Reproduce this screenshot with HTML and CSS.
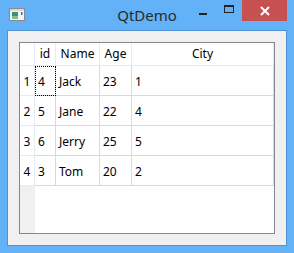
FILE: index.html
```html
<!DOCTYPE html>
<html lang="en">
<head>
  <meta charset="UTF-8" />
  <title>QtDemo</title>
  <link rel="stylesheet" href="styles.css">
</head>
<body>
  <div class="window">
    <div class="titlebar">
      <svg class="app-icon" width="16" height="13" viewBox="0 0 16 13">
        <rect x="0.5" y="0.5" width="15" height="12" fill="#f4f4f4" stroke="#8a8a8a"/>
        <rect x="1" y="1" width="14" height="2" fill="#d8d8d8"/>
        <rect x="3" y="4" width="6" height="7" fill="#3f8f80"/>
        <rect x="3" y="8" width="6" height="3" fill="#7cbf9e"/>
        <rect x="12" y="4" width="1.5" height="3" fill="#2e6fd0"/>
      </svg>
      <div class="title">QtDemo</div>
      <div class="controls">
        <div class="btn btn-min"><span class="min-bar"></span></div>
        <div class="btn btn-max"><span class="max-box"></span></div>
        <div class="btn btn-close">
          <svg width="10" height="10" viewBox="0 0 10 10">
            <path d="M1 1 L9 9 M9 1 L1 9" stroke="#fff" stroke-width="2"/>
          </svg>
        </div>
      </div>
    </div>
    <div class="client">
      <div class="grid">
        <div class="hcell corner"></div>
        <div class="hcell">id</div>
        <div class="hcell">Name</div>
        <div class="hcell">Age</div>
        <div class="hcell">City</div>

        <div class="vcell">1</div>
        <div class="cell focus">4</div>
        <div class="cell">Jack</div>
        <div class="cell">23</div>
        <div class="cell">1</div>

        <div class="vcell">2</div>
        <div class="cell">5</div>
        <div class="cell">Jane</div>
        <div class="cell">22</div>
        <div class="cell">4</div>

        <div class="vcell">3</div>
        <div class="cell">6</div>
        <div class="cell">Jerry</div>
        <div class="cell">25</div>
        <div class="cell">5</div>

        <div class="vcell">4</div>
        <div class="cell">3</div>
        <div class="cell">Tom</div>
        <div class="cell">20</div>
        <div class="cell">2</div>

        <div class="vfill"></div>
        <div class="empty"></div>
      </div>
    </div>
  </div>
</body>
</html>
```

FILE: styles.css
```css
body { margin: 0; font-family: "Noto Sans", "Open Sans", sans-serif; }
.window {
  width: 294px;
  height: 253px;
  background: #63b1f7;
  display: flex;
  flex-direction: column;
  box-sizing: border-box;
}
.titlebar {
  height: 30px;
  position: relative;
  display: flex;
  align-items: flex-start;
}
.app-icon { margin: 8px 0 0 9px; }
.title {
  position: absolute;
  left: 0;
  right: 0;
  top: 5px;
  text-align: center;
  font-size: 15px;
  color: #2a2a2a;
}
.controls {
  margin-left: auto;
  margin-right: 7px;
  display: flex;
  position: relative;
}
.btn {
  height: 21px;
  display: flex;
  align-items: center;
  justify-content: center;
}
.btn-min { width: 26px; }
.btn-max { width: 26px; }
.btn-close { width: 45px; background: #c75050; }
.min-bar { width: 8px; height: 2px; background: #222; margin-top: 6px; }
.max-box {
  width: 8px;
  height: 5px;
  border: 1px solid #222;
  border-top-width: 2px;
  margin-top: -3px;
}
.client {
  margin: 0 7px 7px 7px;
  flex: 1;
  background: #f0f0f0;
  border: 1px solid #4f93d4;
  padding: 11px;
  display: flex;
}
.grid {
  flex: 1;
  border: 1px solid #828790;
  background: #fff;
  display: grid;
  grid-template-columns: 15px 21px 44px 32px 1fr;
  grid-template-rows: 23px 30px 30px 30px 30px 1fr;
  font-size: 12px;
  color: #000;
}
.hcell {
  border-right: 1px solid #e3ebf5;
  border-bottom: 1px solid #e3ebf5;
  display: flex;
  align-items: center;
  justify-content: center;
  padding-bottom: 1px;
}
.corner { border-right-color: #e3ebf5; }
.vcell {
  border-right: 1px solid #e3ebf5;
  border-bottom: 1px solid #e3ebf5;
  display: flex;
  align-items: center;
  justify-content: center;
  padding-top: 2px;
}
.cell {
  border-right: 1px solid #d9d9d9;
  border-bottom: 1px solid #d9d9d9;
  display: flex;
  align-items: center;
  padding: 1px 0 0 3px;
}
.focus { outline: 1px dotted #000; outline-offset: -1px; }
.vfill { background: #f0f0f0; }
.empty { grid-column: 2 / 6; }
```
